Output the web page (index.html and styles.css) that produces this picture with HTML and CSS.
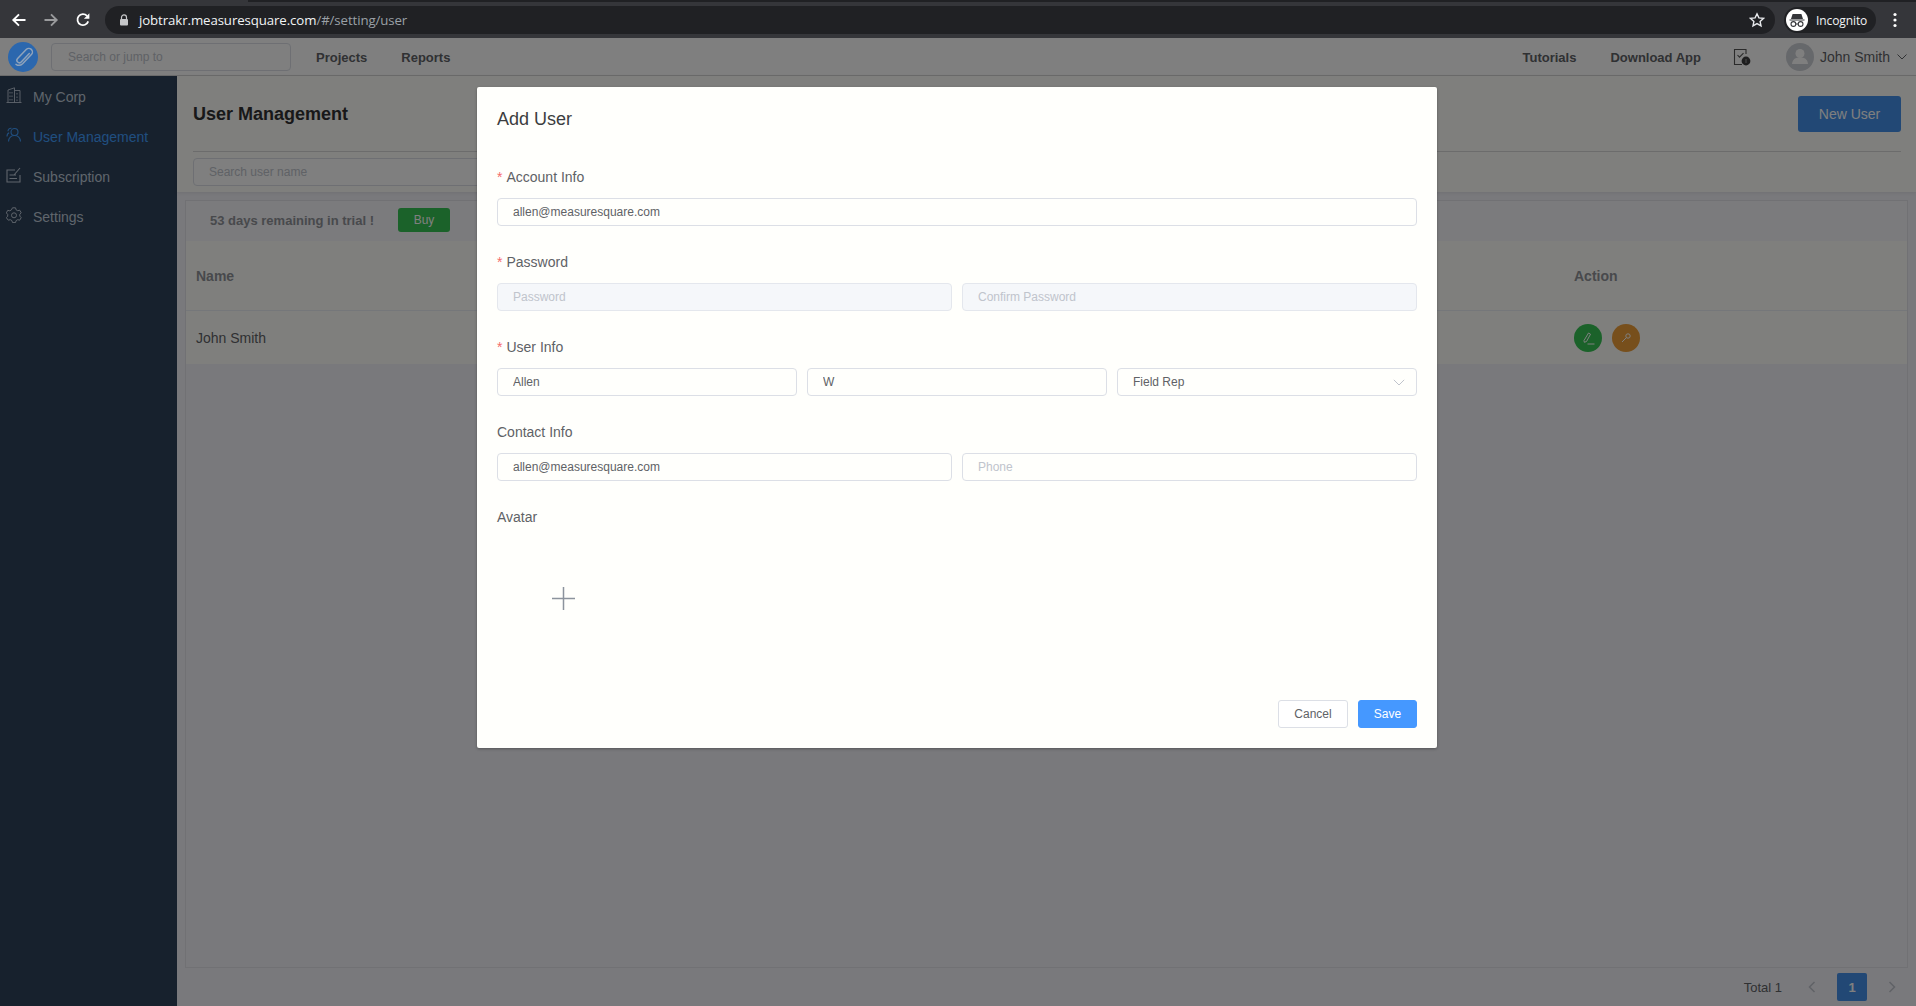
FILE: index.html
```html
<!DOCTYPE html>
<html lang="en">
<head>
<meta charset="utf-8">
<title>JobTrakr - User Management</title>
<link rel="stylesheet" href="styles.css">
</head>
<body>
<header class="chrome">
  <div class="chrome-strip"></div>
  <div class="chrome-bar">
    <svg class="c-ico back" viewBox="0 0 16 16"><path d="M14.5 8H2.5M8 2.3 2.3 8 8 13.7" fill="none" stroke="#fff" stroke-width="1.9"/></svg>
    <svg class="c-ico fwd" viewBox="0 0 16 16"><path d="M1.5 8h12M8 2.3 13.7 8 8 13.7" fill="none" stroke="#9a9b9d" stroke-width="1.9"/></svg>
    <svg class="c-ico reload" viewBox="0 0 16 16"><path d="M13.2 9.4A5.5 5.5 0 1 1 12 3.9" fill="none" stroke="#fff" stroke-width="1.8"/><path d="M14.4 1.2v5.5H8.9z" fill="#fff"/></svg>
    <div class="omnibox">
      <svg class="lock" viewBox="0 0 10 12"><path d="M2.5 5V3.4a2.5 2.5 0 0 1 5 0V5" fill="none" stroke="#c6c7c9" stroke-width="1.2"/><rect x="1" y="5" width="8" height="6.5" rx="1" fill="#c6c7c9"/></svg>
      <span class="url"><b class="host">jobtrakr.measuresquare.com</b>/#/setting/user</span>
      <svg class="star" viewBox="0 0 16 16"><path d="M8 1.8l1.9 4.1 4.5.5-3.3 3 .9 4.4L8 11.6l-4 2.2.9-4.4-3.3-3 4.5-.5z" fill="none" stroke="#e8eaed" stroke-width="1.4"/></svg>
    </div>
    <div class="incognito">
      <span class="inc-badge">
        <svg viewBox="0 0 22 22"><path d="M5 10l1.6-5h8.8L17 10zM3.5 10.4h15v1h-15z" fill="#35363a"/><circle cx="7.4" cy="15" r="2.4" fill="none" stroke="#35363a" stroke-width="1.1"/><circle cx="14.6" cy="15" r="2.4" fill="none" stroke="#35363a" stroke-width="1.1"/><path d="M9.8 15h2.4" stroke="#35363a" stroke-width="1"/></svg>
      </span>
      <span class="inc-text">Incognito</span>
    </div>
    <svg class="kebab" viewBox="0 0 4 16"><circle cx="2" cy="2.5" r="1.6" fill="#fff"/><circle cx="2" cy="8" r="1.6" fill="#fff"/><circle cx="2" cy="13.5" r="1.6" fill="#fff"/></svg>
  </div>
</header>

<div class="app">
  <nav class="topnav">
    <svg class="logo" viewBox="0 0 30 30"><circle cx="15" cy="15" r="15" fill="#2b67ae"/><path d="M20.3 11.5 12.2 20a2.5 2.5 0 0 1-3.6-3.5l8.6-9a3.6 3.6 0 0 1 5.2 5l-8.8 9.2a5.3 5.3 0 0 1-6.6.6" fill="none" stroke="#8fa3bb" stroke-width="1.5" stroke-linecap="round" transform="translate(1 0)"/></svg>
    <input class="nav-search" type="text" placeholder="Search or jump to">
    <a class="nav-link nav-projects">Projects</a>
    <a class="nav-link">Reports</a>
    <div class="nav-right">
      <a class="nav-link">Tutorials</a>
      <a class="nav-link">Download App</a>
      <svg class="nav-doc" viewBox="0 0 18 18"><path d="M13 6V1.5H1.5v15H9" fill="none" stroke="#555" stroke-width="1.1"/><path d="M4.5 7l2 2.2 4-4" fill="none" stroke="#555" stroke-width="1.1"/><circle cx="13" cy="13" r="4.4" fill="#3c3c3e"/><path d="M13 11v4" stroke="#999" stroke-width="1"/></svg>
      <svg class="nav-avatar" viewBox="0 0 28 28"><circle cx="14" cy="14" r="14" fill="#cdd0d6"/><circle cx="14" cy="10.5" r="4.5" fill="#fff"/><path d="M6 21c.5-4.5 3.5-6 5-6.2h6c1.5.2 4.5 1.7 5 6.2z" fill="#fff"/></svg>
      <span class="nav-user">John Smith</span>
      <svg class="nav-caret" viewBox="0 0 10 6"><path d="M.5.5 5 5 9.5.5" fill="none" stroke="#606266" stroke-width="1"/></svg>
    </div>
  </nav>

  <div class="layout">
    <aside class="sidebar">
      <a class="side-item">
        <svg class="side-ico" viewBox="0 0 16 16"><path d="M.5 15.5h15M2 15.5V3L8.5.8v14.7M8.5 3.5H14v12M4 5v1.5M6 5v1.5M4 8.5V10M6 8.5V10M4 12v1.5M6 12v1.5M11 6v1.500M11 9.500V11M11 12.500V14" fill="none" stroke="currentColor" stroke-width=".9"/></svg>
        <span>My Corp</span>
      </a>
      <a class="side-item is-active">
        <svg class="side-ico" viewBox="0 0 16 16"><circle cx="8.500" cy="5" r="3.500" fill="none" stroke="currentColor" stroke-width="1.100"/><path d="M2.500 14.500c.3-3.500 2.500-6 6-6s5.700 2.500 6 6M1 9.500c0-2 .8-3.300 2.200-3.800M2 4.200A3 3 0 0 1 5.500 1.300" fill="none" stroke="currentColor" stroke-width="1.100"/></svg>
        <span>User Management</span>
      </a>
      <a class="side-item">
        <svg class="side-ico" viewBox="0 0 16 16"><path d="M14 8v7H1V3h8M3.500 8H10M3.500 11.500h7.500M8 8l6-7" fill="none" stroke="currentColor" stroke-width="1.100"/></svg>
        <span>Subscription</span>
      </a>
      <a class="side-item">
        <svg class="side-ico" viewBox="0 0 16 16"><path d="M6.500.8h3l.6 2 1.600.9 2-.5 1.500 2.600-1.400 1.500v1.800l1.400 1.500-1.500 2.600-2-.5-1.600.9-.6 2h-3l-.6-2-1.600-.9-2 .5L.3 10.700l1.400-1.500V7.400L.3 5.900l1.500-2.600 2 .5 1.600-.9z" fill="none" stroke="currentColor" stroke-linejoin="round"/><circle cx="8" cy="8.300" r="2.500" fill="none" stroke="currentColor"/></svg>
        <span>Settings</span>
      </a>
    </aside>

    <main class="main">
      <section class="page-head">
        <div class="title-row">
          <h1 class="page-title">User Management</h1>
          <button class="btn-new" type="button">New User</button>
        </div>
        <input class="user-search" type="text" placeholder="Search user name">
      </section>

      <section class="card">
        <div class="trial">
          <span class="trial-text">53 days remaining in trial !</span>
          <button class="btn-buy" type="button">Buy</button>
        </div>
        <div class="tbl-row tbl-head"><span>Name</span><span class="col-action">Action</span></div>
        <div class="tbl-row tbl-body">
          <span>John Smith</span>
          <span class="col-action actions">
            <span class="round round-green"><svg viewBox="0 0 14 14"><path d="M3 9.500 7.500 2l2 1.200L5.500 10.500l-2.200.8zM6.500 13h7" fill="none" stroke="#fff" stroke-width="1"/></svg></span>
            <span class="round round-orange"><svg viewBox="0 0 14 14"><circle cx="9" cy="5" r="2.200" fill="none" stroke="#fff" stroke-width="1"/><path d="M7.400 6.600 3 11" stroke="#fff" stroke-width="1"/></svg></span>
          </span>
        </div>
      </section>

      <footer class="pager">
        <span class="pager-total">Total 1</span>
        <svg class="pager-arrow" viewBox="0 0 8 12"><path d="M6.500 1 1.500 6l5 5" fill="none" stroke="#c0c4cc" stroke-width="1.500"/></svg>
        <span class="pager-page">1</span>
        <svg class="pager-arrow" viewBox="0 0 8 12"><path d="M1.500 1l5 5-5 5" fill="none" stroke="#c0c4cc" stroke-width="1.500"/></svg>
      </footer>
    </main>
  </div>

  <div class="overlay">
    <form class="modal">
      <h2 class="modal-title">Add User</h2>

      <div class="field">
        <label class="field-label"><i class="req">*</i>Account Info</label>
        <input class="inp" type="text" value="allen@measuresquare.com">
      </div>

      <div class="field">
        <label class="field-label"><i class="req">*</i>Password</label>
        <div class="cols">
          <input class="inp" type="text" placeholder="Password" disabled>
          <input class="inp" type="text" placeholder="Confirm Password" disabled>
        </div>
      </div>

      <div class="field">
        <label class="field-label"><i class="req">*</i>User Info</label>
        <div class="cols">
          <input class="inp" type="text" value="Allen">
          <input class="inp" type="text" value="W">
          <div class="select">
            <span>Field Rep</span>
            <svg class="select-caret" viewBox="0 0 12 7"><path d="M.8.8 6 6 11.200.8" fill="none" stroke="#c0c4cc" stroke-width="1"/></svg>
          </div>
        </div>
      </div>

      <div class="field">
        <label class="field-label">Contact Info</label>
        <div class="cols">
          <input class="inp" type="text" value="allen@measuresquare.com">
          <input class="inp" type="text" placeholder="Phone">
        </div>
      </div>

      <div class="field field-avatar">
        <label class="field-label">Avatar</label>
        <div class="uploader">
          <svg class="plus" viewBox="0 0 23 23"><path d="M11.500 0v23M0 11.500h23" stroke="#8c939d" stroke-width="1.500"/></svg>
        </div>
      </div>

      <div class="modal-foot">
        <button class="btn btn-cancel" type="button">Cancel</button>
        <button class="btn btn-save" type="button">Save</button>
      </div>
    </form>
  </div>
</div>
</body>
</html>
```
FILE: styles.css
```css
* { box-sizing: border-box; }
html, body { height: 100%; }
body {
  margin: 0;
  height: 1006px;
  overflow: hidden;
  display: flex;
  flex-direction: column;
  font-family: "Liberation Sans", Arial, sans-serif;
  font-size: 14px;
  color: #606266;
  background: #f2f2f8;
}
input, button { font-family: inherit; outline: none; }

/* Browser chrome */
.chrome { height: 38px; flex: none; background: #35363a; }
.chrome-strip { height: 2px; background: linear-gradient(to right, #35363a 248px, #202124 248px); }
.chrome-bar { height: 36px; display: flex; align-items: center; padding: 0 0 0 11px; }
.c-ico { width: 16px; height: 16px; flex: none; }
.fwd { margin-left: 16px; }
.reload { margin-left: 16px; }
.omnibox {
  width: 1670px; height: 28px; margin-left: 14px; flex: none;
  display: flex; align-items: center;
  background: #202124; border-radius: 14px;
  padding: 0 10px 0 14px;
}
.lock { width: 10px; height: 12px; flex: none; margin-right: 10px; }
.url {
  font-family: "Open Sans", sans-serif; font-size: 13.25px; letter-spacing: -.1px;
  color: #9aa0a6; flex: 1; white-space: nowrap;
}
.host { font-weight: 400; color: #f1f3f4; }
.star { width: 16px; height: 16px; flex: none; }
.incognito {
  width: 92px; height: 26px; margin-left: 9px; flex: none;
  display: flex; align-items: center; gap: 8px;
  padding-left: 2px; background: #202124; border-radius: 13px;
}
.inc-badge { width: 22px; height: 22px; border-radius: 50%; background: #fff; display: block; }
.inc-badge svg { display: block; width: 22px; height: 22px; }
.inc-text { font-family: "Open Sans", sans-serif; font-size: 12px; color: #f1f3f4; letter-spacing: -.1px; }
.kebab { width: 4px; height: 16px; margin-left: 17px; flex: none; }

/* App */
.app { flex: 1; min-height: 0; display: flex; flex-direction: column; position: relative; }
.topnav {
  height: 38px; flex: none; display: flex; align-items: center;
  padding: 0 9px 0 8px; background: #fff; border-bottom: 1px solid #d6d6d6;
}
.logo { width: 30px; height: 30px; flex: none; position: relative; z-index: 20; }
.nav-search {
  width: 240px; height: 28px; margin-left: 13px; padding: 0 16px;
  border: 1px solid #dcdfe6; border-radius: 4px; background: #fff;
  font-size: 12px; color: #606266;
}
.nav-search::placeholder, .user-search::placeholder { color: #c0c4cc; opacity: 1; }
.nav-link { font-weight: 700; font-size: 13px; padding-top: 2px; color: #606266; margin-left: 34px; white-space: nowrap; }
.nav-projects { margin-left: 25px; }
.nav-right { margin-left: auto; display: flex; align-items: center; }
.nav-doc { width: 18px; height: 18px; margin-left: 32px; flex: none; }
.nav-avatar { width: 28px; height: 28px; margin-left: 35px; flex: none; }
.nav-user { margin-left: 6px; font-size: 14px; white-space: nowrap; }
.nav-caret { width: 10px; height: 6px; margin-left: 7px; flex: none; }

.layout { flex: 1; min-height: 0; display: flex; }
.sidebar { width: 177px; flex: none; background: #2f425a; padding-top: 1px; }
.side-item {
  height: 40px; display: flex; align-items: center; gap: 11px;
  padding-left: 6px; color: #bfcbd9; font-size: 14px;
}
.side-item.is-active { color: #409eff; }
.side-ico { width: 16px; height: 16px; flex: none; position: relative; top: -2px; }

.main { flex: 1; min-width: 0; display: flex; flex-direction: column; }
.page-head {
  flex: none; height: 116px; padding: 0 15px 0 16px; background: #fffffb;
  box-shadow: 0 1px 4px rgba(0, 0, 0, .08);
}
.title-row {
  height: 76px; display: flex; align-items: center; justify-content: space-between;
  border-bottom: 1px solid #d8d8d8;
}
.page-title { margin: 0; padding-top: 2px; font-size: 18px; font-weight: 700; color: #303133; }
.btn-new {
  width: 103px; height: 36px; border: 0; border-radius: 3px; background: #4490ea;
  color: #fff; font-size: 14px;
}
.user-search {
  display: block; width: 300px; height: 28px; margin-top: 6px; padding: 0 15px;
  border: 1px solid #dcdfe6; border-radius: 4px; background: #fff; font-size: 12px;
}
.card {
  flex: 1; min-height: 0; margin: 8px 8px 0; border: 1px solid #e2e2e8;
}
.trial {
  height: 40px; display: flex; align-items: center; padding: 0 0 2px 24px;
  background: #f6f6fa;
}
.trial-text { font-size: 13px; font-weight: 700; color: #909399; width: 188px; }
.btn-buy {
  width: 52px; height: 24px; border: 0; border-radius: 3px; background: #36c454;
  color: #fff; font-size: 12px;
}
.tbl-row { display: flex; align-items: center; justify-content: space-between; padding-left: 10px; background: #fffffb; }
.tbl-head { height: 70px; font-weight: 700; color: #909399; border-bottom: 1px solid #ebeef5; }
.tbl-body { height: 53px; color: #606266; }
.col-action { width: 333px; }
.actions { display: flex; gap: 10px; }
.round {
  width: 28px; height: 28px; border-radius: 50%;
  display: flex; align-items: center; justify-content: center;
}
.round svg { width: 14px; height: 14px; }
.round-green { background: #36c454; }
.round-orange { background: #ee9e38; }
.pager {
  flex: none; height: 38px; display: flex; align-items: center; justify-content: flex-end;
  padding: 0 20px 0 0;
}
.pager-total { font-size: 13px; margin-right: 26px; color: #606266; }
.pager-arrow { width: 8px; height: 12px; flex: none; }
.pager-page {
  width: 30px; height: 28px; margin: 0 21px; border-radius: 2px;
  display: flex; align-items: center; justify-content: center;
  background: #4490ea; color: #fff; font-weight: 700; font-size: 13px;
}

/* Modal */
.overlay {
  position: absolute; inset: 0;
  display: flex; justify-content: center; align-items: flex-start;
  padding: 49px 2px 0 0;
  background: rgba(0, 0, 0, .5);
}
.modal {
  width: 960px; height: 661px; padding: 20px 20px 20px;
  display: flex; flex-direction: column;
  background: #fffffc; border-radius: 2px;
  box-shadow: 0 1px 3px rgba(0, 0, 0, .3);
}
.modal-title { height: 50px; margin: 0; font-size: 18px; font-weight: 400; line-height: 24px; color: #3c3d40; }
.field { margin-bottom: 16px; }
.field-label { display: block; height: 41px; line-height: 40px; font-size: 14px; color: #606266; }
.req { font-style: normal; color: #f56c6c; margin-right: 4px; }
.cols { display: grid; grid-auto-flow: column; grid-auto-columns: minmax(0, 1fr); gap: 10px; }
.inp {
  display: block; width: 100%; height: 28px; padding: 0 15px;
  border: 1px solid #dcdfe6; border-radius: 4px; background: #fffffc;
  font-size: 12px; color: #606266;
}
.inp::placeholder { color: #c0c4cc; opacity: 1; }
.inp:disabled { background: #f5f7fa; border-color: #e4e7ed; }
.select {
  height: 28px; display: flex; align-items: center; justify-content: space-between;
  padding: 0 11px 0 15px; border: 1px solid #dcdfe6; border-radius: 4px; font-size: 12px;
}
.select-caret { width: 12px; height: 7px; flex: none; }
.field-avatar { margin-bottom: 0; flex: 1; }
.uploader { width: 132px; height: 120px; display: flex; align-items: center; justify-content: center; }
.plus { width: 23px; height: 23px; }
.modal-foot { display: flex; justify-content: flex-end; gap: 10px; }
.btn { height: 28px; border-radius: 3px; font-size: 12px; }
.btn-cancel { width: 70px; background: #fff; border: 1px solid #dcdfe6; color: #606266; }
.btn-save { width: 59px; background: #4598ff; border: 1px solid #4598ff; color: #fff; }
```
